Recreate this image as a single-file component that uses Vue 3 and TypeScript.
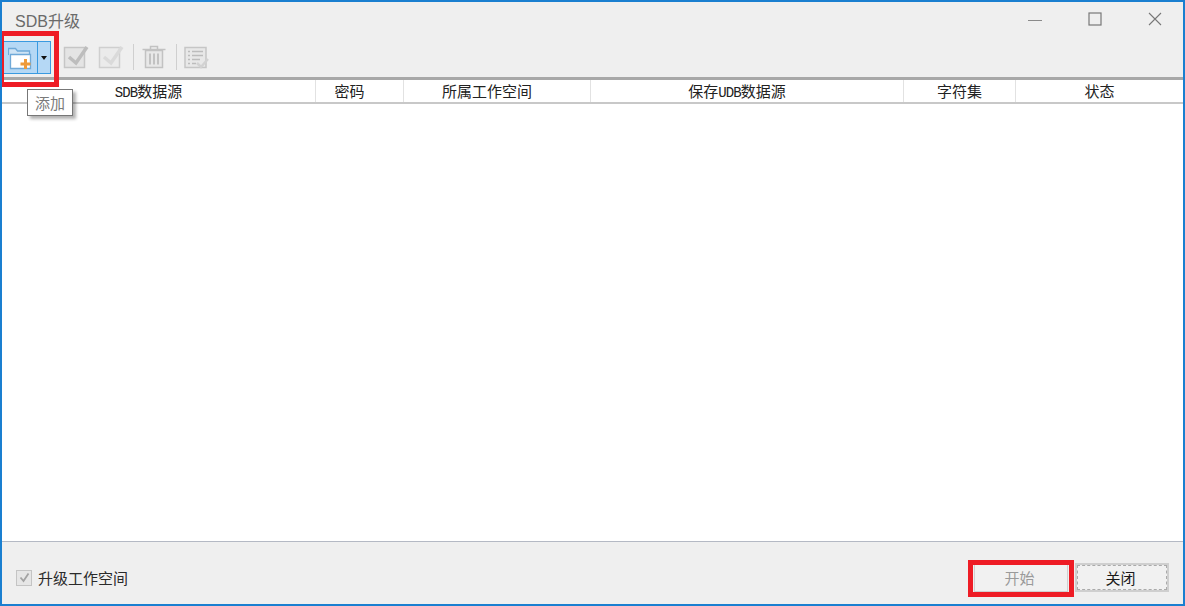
<script setup lang="ts">
interface Column { label: string; width: number; shifted: boolean }
const columns: Column[] = [
  { label: 'SDB数据源', width: 314, shifted: true },
  { label: '密码', width: 88, shifted: true },
  { label: '所属工作空间', width: 187, shifted: true },
  { label: '保存UDB数据源', width: 313, shifted: true },
  { label: '字符集', width: 112, shifted: false },
  { label: '状态', width: 167, shifted: false },
]
const parts = (label: string): string[] => label.match(/[A-Za-z]+|[^A-Za-z]+/g) ?? []
const isLatin = (part: string): boolean => /^[A-Za-z]+$/.test(part)
</script>

<template>
  <div class="window">
    <header class="titlebar">
      <span class="title">SDB升级</span>
      <div class="controls">
        <svg width="14" height="14" viewBox="0 0 14 14"><path d="M0 8.500h14" stroke="#8a8a8a" stroke-width="1" fill="none"/></svg>
        <svg width="14" height="14" viewBox="0 0 14 14"><rect x="1" y="1" width="12" height="12" stroke="#777" stroke-width="1.200" fill="none"/></svg>
        <svg width="14" height="14" viewBox="0 0 14 14"><path d="M1 1l12 12M13 1L1 13" stroke="#777" stroke-width="1.100" fill="none"/></svg>
      </div>
    </header>

    <div class="toolbar">
      <div class="split">
        <div class="split-main">
          <svg width="26" height="24" viewBox="0 0 26 24">
            <path d="M0.500 9V2.500h7l2 2.500h12v4" fill="#cfe4f5" stroke="#6fa9d8" stroke-width="1.300"/>
            <path d="M2.500 8.500h20v14h-20z" fill="#fff" stroke="#6fa9d8" stroke-width="1.300"/>
            <path d="M17.500 13v10M12.500 18h10" stroke="#ee9a3a" stroke-width="3" fill="none"/>
          </svg>
        </div>
        <div class="split-arrow"></div>
      </div>
      <svg class="tool check-a" width="26" height="26" viewBox="0 0 26 26">
        <rect x="1.500" y="3.500" width="20" height="20" fill="#e4e4e4" stroke="#c6c6c6" stroke-width="1.500"/>
        <path d="M6 13l7 6L24 3" stroke="#bdbdbd" stroke-width="3.500" fill="none"/>
      </svg>
      <svg class="tool check-b" width="26" height="26" viewBox="0 0 26 26">
        <rect x="1.500" y="3.500" width="20" height="20" fill="#ebebeb" stroke="#cfcfcf" stroke-width="1.500"/>
        <path d="M6 13l7 6L24 3" stroke="#dadada" stroke-width="3.500" fill="none"/>
      </svg>
      <i class="sep sep-a"></i>
      <svg class="tool trash" width="24" height="26" viewBox="0 0 24 26">
        <path d="M0.500 5.500h23M8.500 5V2.500h7V5" stroke="#c2c2c2" stroke-width="1.500" fill="none"/>
        <rect x="3.500" y="6.500" width="17" height="17" fill="#e8e8e8" stroke="#c2c2c2" stroke-width="1.500"/>
        <path d="M8 9.500v11M12 9.500v11M16 9.500v11" stroke="#c2c2c2" stroke-width="2" fill="none"/>
      </svg>
      <i class="sep sep-b"></i>
      <svg class="tool list" width="26" height="26" viewBox="0 0 26 26">
        <rect x="1" y="3.500" width="21" height="20" fill="#e8e8e8" stroke="#c6c6c6" stroke-width="1.500"/>
        <path d="M4 7.500h2M8 7.500h11M4 11.500h2M8 11.500h11M4 15.500h2M8 15.500h8M4 19.500h2M8 19.500h4" stroke="#bcbcbc" stroke-width="1.500" fill="none"/>
        <path d="M13 19l4 4 7-8" stroke="#d2d2d2" stroke-width="2.500" fill="none"/>
      </svg>
    </div>

    <main class="table">
      <div class="thead">
        <div
          v-for="col in columns"
          :key="col.label"
          class="th"
          :class="{ shifted: col.shifted }"
          :style="{ width: col.width + 'px' }"
        ><span
          v-for="(part, i) in parts(col.label)"
          :key="i"
          :class="{ latin: isLatin(part) }"
        >{{ part }}</span></div>
      </div>
    </main>

    <footer class="footer">
      <label class="check">
        <span class="box">
          <svg width="13" height="13" viewBox="0 0 13 13"><path d="M2.500 6.500l3 3.500 5-7.500" stroke="#a3a3a3" stroke-width="1.800" fill="none"/></svg>
        </span>
        <span>升级工作空间</span>
      </label>
      <div class="buttons">
        <button class="btn disabled" type="button">开始</button>
        <button class="btn focus" type="button">关闭</button>
      </div>
    </footer>

    <div class="tooltip">添加</div>
    <div class="mark mark-add"></div>
    <div class="mark mark-start"></div>
  </div>
</template>

<style>
html, body { margin: 0; padding: 0; background: #efefef; }
</style>

<style scoped>
.window {
  position: relative;
  box-sizing: border-box;
  width: 1185px;
  height: 606px;
  display: flex;
  flex-direction: column;
  background: #efefef;
  border: 2px solid #1a7fd0;
  font-family: "Noto Sans CJK SC", "Liberation Sans", sans-serif;
  overflow: hidden;
}
.titlebar {
  height: 37px;
  display: flex;
  align-items: center;
  justify-content: space-between;
  flex: none;
}
.title {
  margin-left: 13px;
  margin-top: -1px;
  font-family: "Liberation Sans", "Noto Sans CJK SC", sans-serif;
  font-size: 16px;
  color: #6a6a6a;
}
.controls {
  display: flex;
  gap: 46px;
  margin-right: 21px;
  margin-top: -3px;
  align-items: center;
}
.toolbar {
  height: 38px;
  flex: none;
  display: flex;
  align-items: flex-start;
  padding: 2px 0 0 1px;
  box-sizing: border-box;
}
.split {
  display: flex;
  height: 33px;
  width: 48px;
  box-sizing: border-box;
  border: 1px solid #3a9ae0;
  background: #b5d8f5;
}
.split-main {
  width: 34px;
  flex: none;
  display: flex;
  align-items: center;
  justify-content: center;
  border-right: 1px solid #3a9ae0;
  box-sizing: border-box;
}
.split-arrow {
  flex: 1;
  position: relative;
}
.split-arrow::after {
  content: "";
  position: absolute;
  left: 3px;
  top: 14px;
  border-left: 3px solid transparent;
  border-right: 3px solid transparent;
  border-top: 4px solid #111;
}
.tool { flex: none; margin-top: 3px; }
.check-a { margin-left: 12px; }
.check-b { margin-left: 9px; }
.trash { margin-left: 8px; }
.list { margin-left: 7px; }
.sep {
  width: 1px;
  height: 26px;
  margin-top: 3px;
  background: #cfcfcf;
}
.sep-a { margin-left: 9px; }
.sep-b { margin-left: 10px; }
.table {
  flex: 1;
  background: #fff;
  border-top: 3px solid #a8a8a8;
  border-bottom: 1px solid #b4b9c4;
  min-height: 0;
}
.thead {
  display: flex;
  height: 22px;
  border-bottom: 2px solid #c8c8c8;
}
.th {
  flex: none;
  box-sizing: border-box;
  height: 22px;
  line-height: 22px;
  text-align: center;
  font-size: 15px;
  color: #222;
  border-right: 1px solid #e2e2e2;
  white-space: nowrap;
}
.th.shifted { padding-right: 20px; }
.th:last-child { border-right: none; }
.latin {
  font-family: "Liberation Mono", monospace;
  font-size: 14px;
  letter-spacing: -0.900px;
}
.footer {
  height: 62px;
  flex: none;
  display: flex;
  align-items: center;
  justify-content: space-between;
  box-sizing: border-box;
  padding: 9px 14px 0 14px;
}
.check {
  display: flex;
  align-items: center;
  gap: 6px;
  font-size: 15px;
  color: #2a2a2a;
}
.box {
  width: 14px;
  height: 14px;
  border: 1px solid #c4c4c4;
  background: #e6e6e6;
  display: flex;
  align-items: center;
  justify-content: center;
}
.buttons {
  display: flex;
  gap: 7px;
}
.btn {
  box-sizing: border-box;
  width: 94px;
  height: 29px;
  padding: 0 3px 0 0;
  font-family: inherit;
  font-size: 15px;
  background: #f1f1f1;
  border: 1px solid #d0d0d0;
  border-radius: 0;
}
.btn.disabled { color: #9a9a9a; }
.btn.focus {
  color: #1a1a1a;
  outline: 1px dashed #aaa;
  outline-offset: -3px;
  border: 2px solid #cfcfcf;
}
.tooltip {
  position: absolute;
  left: 25px;
  top: 87px;
  box-sizing: border-box;
  width: 46px;
  height: 27px;
  line-height: 25px;
  text-align: center;
  font-size: 15px;
  color: #7a7a7a;
  background: #fff;
  border: 1px solid #777;
  box-shadow: 3px 3px 3px rgba(0, 0, 0, 0.3);
}
.mark {
  position: absolute;
  box-sizing: border-box;
  border: 5px solid #ee1c25;
  pointer-events: none;
}
.mark-add {
  left: -2px;
  top: 29px;
  width: 59px;
  height: 56px;
  border-left-width: 4px;
}
.mark-start {
  left: 966px;
  top: 558px;
  width: 106px;
  height: 37px;
}
</style>
